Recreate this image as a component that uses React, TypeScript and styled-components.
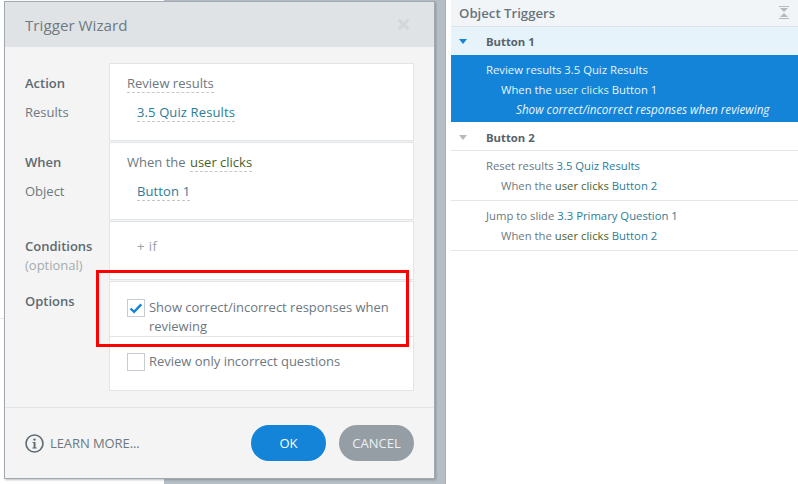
import { createGlobalStyle, styled } from 'styled-components';

const GlobalStyle = createGlobalStyle`
  html, body {
    margin: 0;
    padding: 0;
    background: #ffffff;
    font-family: "Open Sans", "Liberation Sans", sans-serif;
  }
`;

const Page = styled.div`
  position: relative;
  width: 798px;
  height: 484px;
  overflow: hidden;
  display: flex;
  background: #fff;
`;

const Backdrop = styled.div`
  width: 445px;
  flex: none;
  display: flex;
  border-right: 1px solid #a9b1b9;
  box-sizing: content-box;
`;

const BackdropLeft = styled.div`
  width: 164px;
  background: linear-gradient(#fff 318px, #e4e6e8 318px, #e4e6e8 319px, #fff 319px);
`;

const BackdropRight = styled.div`
  flex: 1;
  background: #b5bdc5;
`;

const Dialog = styled.div`
  position: absolute;
  left: 4px;
  top: 1px;
  width: 431px;
  height: 478px;
  box-sizing: border-box;
  border: 1px solid #a3a9ae;
  box-shadow: 1px 1px 2px rgba(60, 70, 80, 0.35);
  background: #f4f4f4;
  display: flex;
  flex-direction: column;
`;

const DialogHeader = styled.div`
  height: 45px;
  flex: none;
  background: #dfe3e6;
  display: flex;
  align-items: center;
  justify-content: space-between;
  padding: 0 24px 0 20px;
`;

const DialogTitle = styled.div`
  font-size: 15.2px;
  color: #6f7a82;
`;

const CloseIcon = styled.svg`
  width: 13px;
  height: 13px;
  display: block;
`;

const DialogBody = styled.div`
  flex: 1;
  padding: 16px 20px 0 20px;
  display: flex;
  flex-direction: column;
  gap: 1px;
`;

const Section = styled.div`
  display: flex;
  align-items: stretch;
`;

const Labels = styled.div<{ $top?: number }>`
  width: 84px;
  flex: none;
  padding-top: ${(p) => p.$top ?? 11}px;
`;

const Label = styled.div<{ $strong?: boolean; $muted?: boolean; $gap?: number }>`
  font-size: 13px;
  line-height: 18px;
  font-weight: ${(p) => (p.$strong ? 600 : 400)};
  color: ${(p) => (p.$muted ? '#a5abaf' : p.$strong ? '#5d6a72' : '#6d787f')};
  margin-bottom: ${(p) => p.$gap ?? 11}px;
`;

const Card = styled.div<{ $height: number }>`
  width: 305px;
  height: ${(p) => p.$height}px;
  box-sizing: border-box;
  background: #fff;
  border: 1px solid #e1e5e8;
  padding: 10px 17px 0;
`;

const CardLine = styled.div<{ $indent?: boolean }>`
  font-size: 13px;
  line-height: 18px;
  color: #6d787f;
  margin-left: ${(p) => (p.$indent ? 10 : 0)}px;
  margin-bottom: 10px;
`;

const Picker = styled.span<{ $tone?: 'plain' | 'link' | 'green' }>`
  display: inline-block;
  line-height: 17px;
  letter-spacing: ${(p) => (p.$tone === 'link' ? '0.12px' : '0')};
  margin-left: ${(p) => (p.$tone === 'green' ? '1px' : '0')};
  border-bottom: 1px dashed #c5c8ca;
  color: ${(p) =>
    p.$tone === 'link' ? '#2b7c99' : p.$tone === 'green' ? '#4a5f2a' : '#6d787f'};
`;

const AddCondition = styled.div`
  font-size: 13px;
  line-height: 18px;
  color: #9aa1a6;
  margin: 5px 0 0 10px;
  letter-spacing: 0.5px;
`;

const OptionCard = styled.div`
  width: 305px;
  height: 110px;
  box-sizing: border-box;
  background: #fff;
  border: 1px solid #e1e5e8;
  display: flex;
  flex-direction: column;
`;

const OptionRow = styled.div<{ $divided?: boolean; $height: number }>`
  height: ${(p) => p.$height}px;
  flex: none;
  box-sizing: border-box;
  padding: ${(p) => (p.$divided ? '16px' : '15px')} 17px 0;
  display: flex;
  gap: 4px;
  border-bottom: ${(p) => (p.$divided ? '1px solid #e1e5e8' : '0')};
  font-size: 13px;
  line-height: 19px;
  letter-spacing: -0.015px;
  color: #6d787f;
`;

const CheckBox = styled.div`
  width: 18px;
  height: 18px;
  flex: none;
  box-sizing: border-box;
  border: 1px solid #c6ccd1;
  background: #fff;
  position: relative;
  top: 1px;
`;

const DialogFooter = styled.div`
  height: 71px;
  flex: none;
  box-sizing: border-box;
  border-top: 1px solid #e1e5e8;
  display: flex;
  align-items: center;
  padding: 0 20px;
`;

const LearnMore = styled.div`
  display: flex;
  align-items: center;
  gap: 6px;
  font-size: 13px;
  letter-spacing: -0.08px;
  color: #6d787f;
  flex: 1;
`;

const PillButton = styled.button<{ $primary?: boolean }>`
  width: 75px;
  height: 36px;
  border: 0;
  border-radius: 18px;
  margin-left: 13px;
  padding: 0;
  font-family: inherit;
  font-size: 13px;
  color: ${(p) => (p.$primary ? '#fff' : '#eef0f1')};
  background: ${(p) => (p.$primary ? '#1484d8' : '#959ea5')};
`;

const Highlight = styled.div`
  position: absolute;
  left: 96px;
  top: 270px;
  width: 313px;
  height: 77px;
  box-sizing: border-box;
  border: 3px solid #ff0000;
  pointer-events: none;
`;

const Panel = styled.div`
  flex: 1;
  margin-left: 5px;
  display: flex;
  flex-direction: column;
`;

const PanelHeader = styled.div`
  height: 27px;
  flex: none;
  box-sizing: border-box;
  background: #f2f5f7;
  border-bottom: 1px solid #dfe3e6;
  display: flex;
  align-items: center;
  justify-content: space-between;
  padding: 0 9px 0 8px;
  font-size: 13.2px;
  font-weight: 600;
  color: #68747c;

  svg {
    position: relative;
    top: -1px;
  }
`;

const GroupRow = styled.div<{ $active?: boolean }>`
  height: 28px;
  flex: none;
  box-sizing: border-box;
  padding-top: 1px;
  display: flex;
  align-items: center;
  background: ${(p) => (p.$active ? '#e6f3fb' : '#fff')};
  border-bottom: ${(p) => (p.$active ? '0' : '1px solid #e4e7e9')};
  font-size: 11.3px;
  font-weight: 700;
  color: #56636d;
`;

const Caret = styled.span<{ $active?: boolean }>`
  width: 0;
  height: 0;
  margin: 0 19px 0 8px;
  border-left: 4px solid transparent;
  border-right: 4px solid transparent;
  border-top: 5px solid ${(p) => (p.$active ? '#1484d8' : '#b4babf')};
`;

const TriggerItem = styled.div<{ $selected?: boolean }>`
  flex: none;
  box-sizing: border-box;
  padding: 5px 0 0 35px;
  height: ${(p) => (p.$selected ? 68 : 50)}px;
  background: ${(p) => (p.$selected ? '#1484d8' : '#fff')};
  color: ${(p) => (p.$selected ? '#e8f4fc' : '#6d787f')};
  border-bottom: ${(p) => (p.$selected ? '1px solid #fff' : '1px solid #e4e7e9')};
  font-size: 11.3px;
`;

const ItemLine = styled.div<{ $level?: number; $italic?: boolean }>`
  line-height: ${(p) => (p.$italic ? 18 : 20)}px;
  margin-left: ${(p) => (p.$level ?? 0) * 15}px;
  font-style: ${(p) => (p.$italic ? 'italic' : 'normal')};
  font-size: ${(p) => (p.$italic ? '11.7px' : 'inherit')};
  white-space: nowrap;
`;

const Tok = styled.span<{ $tone: 'link' | 'green'; $inverse?: boolean }>`
  color: ${(p) =>
    p.$inverse
      ? p.$tone === 'green'
        ? '#d6f2dc'
        : '#e8f4fc'
      : p.$tone === 'green'
        ? '#4a5f2a'
        : '#2b7c99'};
`;

function App() {
  return (
    <Page>
      <GlobalStyle />
      <Backdrop>
        <BackdropLeft />
        <BackdropRight />
      </Backdrop>

      <Dialog>
        <DialogHeader>
          <DialogTitle>Trigger Wizard</DialogTitle>
          <CloseIcon viewBox="0 0 13 13">
            <path d="M1.5 1.5l10 10M11.5 1.5l-10 10" stroke="#d3d7d9" strokeWidth="3" />
          </CloseIcon>
        </DialogHeader>

        <DialogBody>
          <Section>
            <Labels>
              <Label $strong>Action</Label>
              <Label>Results</Label>
            </Labels>
            <Card $height={78}>
              <CardLine><Picker>Review results</Picker></CardLine>
              <CardLine $indent><Picker $tone="link">3.5 Quiz Results</Picker></CardLine>
            </Card>
          </Section>
          <Section>
            <Labels>
              <Label $strong>When</Label>
              <Label>Object</Label>
            </Labels>
            <Card $height={78}>
              <CardLine>When the <Picker $tone="green">user clicks</Picker></CardLine>
              <CardLine $indent><Picker $tone="link">Button 1</Picker></CardLine>
            </Card>
          </Section>
          <Section>
            <Labels $top={16}>
              <Label $strong $gap={1}>Conditions</Label>
              <Label $muted $gap={0}>(optional)</Label>
            </Labels>
            <Card $height={59}>
              <AddCondition>+ if</AddCondition>
            </Card>
          </Section>
          <Section>
            <Labels>
              <Label $strong>Options</Label>
            </Labels>
            <OptionCard>
              <OptionRow $divided $height={55}>
                <CheckBox>
                  <svg width="16" height="16" viewBox="0 0 16 16">
                    <path d="M2.5 8.5l3.6 3.4 7.2-7.6" fill="none" stroke="#1484d8" strokeWidth="2.4" />
                  </svg>
                </CheckBox>
                <span>Show correct/incorrect responses when reviewing</span>
              </OptionRow>
              <OptionRow $height={54}>
                <CheckBox />
                <span>Review only incorrect questions</span>
              </OptionRow>
            </OptionCard>
          </Section>
        </DialogBody>

        <DialogFooter>
          <LearnMore>
            <svg width="19" height="19" viewBox="0 0 19 19">
              <circle cx="9.5" cy="9.5" r="8.5" fill="none" stroke="#5d6a72" strokeWidth="1.6" />
              <circle cx="9.5" cy="5.6" r="1.2" fill="#5d6a72" />
              <path d="M7.6 8h2.9v5.4h1.2v1.1H7.4v-1.1h1.2V9.1h-1z" fill="#5d6a72" />
            </svg>
            LEARN MORE...
          </LearnMore>
          <PillButton $primary>OK</PillButton>
          <PillButton>CANCEL</PillButton>
        </DialogFooter>
      </Dialog>

      <Highlight />

      <Panel>
        <PanelHeader>
          Object Triggers
          <svg width="10" height="13" viewBox="0 0 10 13">
            <path d="M0 0h10v1H0zM1 2h8L5 6zM1 11h8L5 7zM0 12h10v1H0z" fill="#b4babf" />
          </svg>
        </PanelHeader>

        <GroupRow $active><Caret $active />Button 1</GroupRow>
        <TriggerItem $selected>
          <ItemLine>Review results <Tok $tone="link" $inverse>3.5 Quiz Results</Tok></ItemLine>
          <ItemLine $level={1}>When the <Tok $tone="green" $inverse>user clicks</Tok> <Tok $tone="link" $inverse>Button 1</Tok></ItemLine>
          <ItemLine $level={2} $italic>Show correct/incorrect responses when reviewing</ItemLine>
        </TriggerItem>

        <GroupRow><Caret />Button 2</GroupRow>
        <TriggerItem>
          <ItemLine>Reset results <Tok $tone="link">3.5 Quiz Results</Tok></ItemLine>
          <ItemLine $level={1}>When the <Tok $tone="green">user clicks</Tok> <Tok $tone="link">Button 2</Tok></ItemLine>
        </TriggerItem>
        <TriggerItem>
          <ItemLine>Jump to slide <Tok $tone="link">3.3 Primary Question 1</Tok></ItemLine>
          <ItemLine $level={1}>When the <Tok $tone="green">user clicks</Tok> <Tok $tone="link">Button 2</Tok></ItemLine>
        </TriggerItem>
      </Panel>
    </Page>
  );
}

export default App;
